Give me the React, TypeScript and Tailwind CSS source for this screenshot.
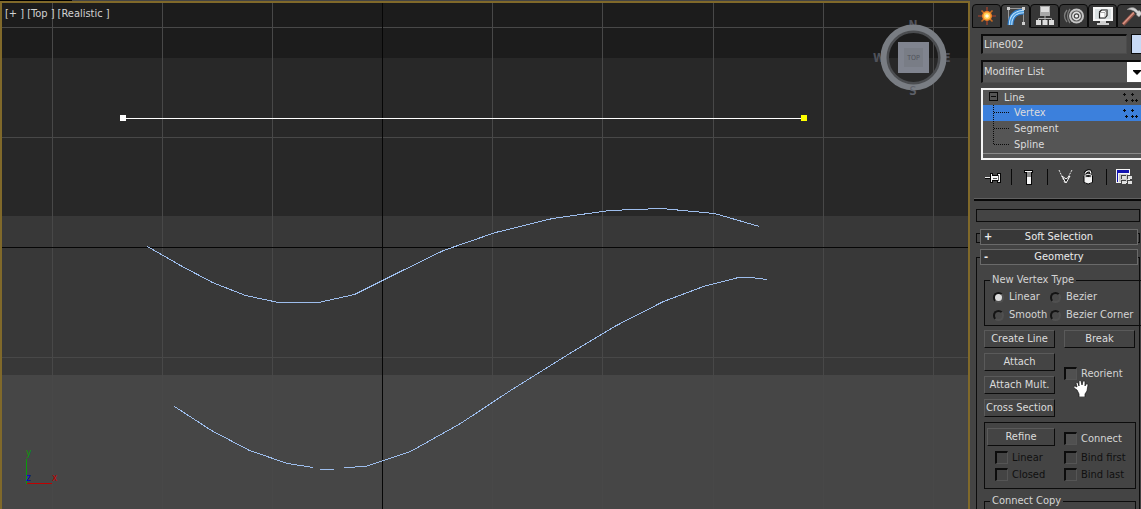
import { useState } from "react";
import type { ReactNode } from "react";

const fieldCls = "border-2 border-r border-b border-[#0c0c0c] border-r-[#4c4c4c] border-b-[#4c4c4c] bg-[#555555] text-[#dcdcdc]";
const btnCls = "h-[18px] border border-[#5a5a5a] border-r-[#0c0c0c] border-b-[#0c0c0c] bg-[#444444] text-center leading-[16px] whitespace-nowrap text-[#dcdcdc]";
const radioCls = "size-[11px] shrink-0 appearance-none rounded-full border-2 border-[#141414] border-r-[#505050] border-b-[#505050] bg-[#4a4a4a] checked:bg-[#dddddd]";
const checkCls = "size-[13px] shrink-0 appearance-none border-2 border-r border-b border-[#0c0c0c] border-r-[#555555] border-b-[#555555] bg-[#505050] disabled:bg-[#444444]";

const GRID_X = [52, 162, 272, 492, 602, 713, 823, 933];
const GRID_Y = [27, 137, 357];
const BANDS = [
  { y: 3, h: 55, fill: "#1c1c1c" },
  { y: 58, h: 158, fill: "#282828" },
  { y: 216, h: 159, fill: "#383838" },
  { y: 375, h: 200, fill: "#464646" },
];
const SPLINES = [
  "147,246 180,265 212,282 245,295 278,302 318,302 354,294 398,272 443,250 495,232 552,218 609,210 661,208 714,213 759,226",
  "174,406 211,430 249,450 287,463 313,467",
  "319,469 333,469",
  "344,467 365,466 410,451 460,423 510,390 566,355 616,325 663,301 703,286 738,277 750,277 767,279",
];

function Viewport() {
  return (
    <main className="relative min-w-0 flex-1 overflow-hidden border-x-2 border-t-2 border-[#80692a] bg-[#464646]">
      <svg className="absolute inset-0 h-full w-full" viewBox="2 3 966 506" preserveAspectRatio="xMinYMin slice" fontFamily="DejaVu Sans Condensed, sans-serif">
        <g shapeRendering="crispEdges">
          {BANDS.map((b) => <rect key={b.y} x="0" y={b.y} width="968" height={b.h} fill={b.fill} />)}
          {GRID_X.map((x) => <rect key={x} x={x} y="3" width="1" height="506" fill="#484848" />)}
          {GRID_Y.map((y) => <rect key={y} x="2" y={y} width="966" height="1" fill="#484848" />)}
          <rect x="382" y="3" width="1" height="506" fill="#060606" />
          <rect x="2" y="247" width="966" height="1" fill="#060606" />
          <rect x="123" y="118" width="681" height="1" fill="#ffffff" />
          <rect x="120" y="115" width="6" height="6" fill="#ffffff" />
          <rect x="801" y="115" width="6" height="6" fill="#ffff00" />
          {SPLINES.map((p) => <polyline key={p} points={p} fill="none" stroke="#9dbdec" strokeWidth="1" transform="translate(.5 .5)" />)}
          <rect x="26" y="459" width="1" height="25" fill="#0a9a0a" />
          <rect x="27" y="483" width="25" height="1" fill="#c00000" />
        </g>
        <g fontSize="10">
          <text x="26" y="456" fill="#0a9a0a">y</text>
          <text x="26" y="481" fill="#0000d0">z</text>
          <text x="52" y="481" fill="#c00000">x</text>
        </g>
        {/* view cube */}
        <g fontSize="12" fontWeight="bold" fill="#50525a" textAnchor="middle">
          <text x="913" y="29">N</text>
          <text x="913" y="95">S</text>
          <text x="879" y="62">W</text>
          <text x="947" y="62">E</text>
        </g>
        <circle cx="913.5" cy="57.5" r="26" fill="none" stroke="#4b4d50" strokeWidth="3" />
        <circle cx="913.5" cy="57.5" r="30" fill="none" stroke="#797d83" strokeWidth="6" />
        <rect x="898" y="42" width="31" height="31" fill="#80848f" />
        <rect x="904" y="48" width="19" height="19" fill="#797d86" />
        <text x="913.5" y="60" fontSize="7" fill="#50535b" textAnchor="middle">TOP</text>
        <text x="913" y="95" fontSize="12" fill="#60636b" textAnchor="middle">S</text>
      </svg>
      <div className="relative flex gap-[3px] px-[3px] pt-[3px] leading-[16px] text-[#d2d2d2]">
        <span>[+ ]</span>
        <span>[Top ]</span>
        <span>[Realistic ]</span>
      </div>
    </main>
  );
}

function CreateIcon() {
  return (
    <svg width="20" height="20" viewBox="0 0 20 20">
      <path d="M10 1v18M1 10h18" stroke="#b0452c" strokeWidth="1.2" />
      <path d="M4.5 4.5l11 11M15.5 4.500l-11 11" stroke="#c76a22" strokeWidth="1.6" />
      <circle cx="10" cy="10" r="5" fill="#ef8526" />
      <circle cx="10" cy="10" r="3.4" fill="#ffd257" />
      <circle cx="10" cy="10" r="1.8" fill="#fffbe0" />
    </svg>
  );
}

function ModifyIcon() {
  return (
    <svg width="20" height="20" viewBox="0 0 20 20" fill="none">
      <path d="M2.5 18V2.5H17.5V17" stroke="#9a9a9a" />
      <path d="M4.500 19C4.500 10 10 5.500 18 5.500" stroke="#2c78c4" strokeWidth="6" />
      <path d="M4.500 19C4.500 10 10 5.500 18 5.500" stroke="#c4e4fa" strokeWidth="3.500" />
      <path d="M4.500 19C4.500 10 10 5.500 18 5.500" stroke="#4a9be0" strokeWidth="1.500" />
      <path d="M1 1h3v3H1zM16 1h3v3h-3zM16 16h3v3h-3z" fill="#d0d0d0" />
    </svg>
  );
}

function HierarchyIcon() {
  return (
    <svg width="20" height="20" viewBox="0 0 20 20">
      <path d="M5 0h10v10H5z" fill="#a8a8a8" />
      <path d="M6 1h8v5H6z" fill="#dcdcdc" />
      <path d="M10 10v5M3.500 15v-2.500h13V15" stroke="#b0b0b0" fill="none" />
      <path d="M1 14h5v5H1zM7.500 14h5v5h-5zM14 14h5v5h-5z" fill="#dddddd" />
    </svg>
  );
}

function MotionIcon() {
  return (
    <svg width="22" height="20" viewBox="0 0 22 20" fill="none">
      <path d="M4 4q-5 6 0 12M7 3q-5 7 0 14" stroke="#7c7c7c" strokeWidth="1.300" />
      <circle cx="13.500" cy="10" r="7.500" fill="#c4c4c4" />
      <circle cx="13.500" cy="10" r="5" fill="#e0e0e0" stroke="#5a5a5a" strokeWidth="1.200" />
      <circle cx="13.500" cy="10" r="2.200" fill="#f4f4f4" stroke="#444" strokeWidth="1.200" />
    </svg>
  );
}

function DisplayIcon() {
  return (
    <svg width="22" height="20" viewBox="0 0 22 20">
      <path d="M1 1h20v14H1z" fill="#f6f6f6" />
      <path d="M3 3h16v10H3z" fill="#dbe1e2" />
      <path d="M7.500 6l2-2h5.500v5.500l-2 2.500H7.500z" fill="#fff" stroke="#1a1a1a" strokeWidth="1.200" />
      <path d="M7.500 6.500H13V12M13 6l2-2" fill="none" stroke="#8a8a8a" strokeWidth=".7" />
      <path d="M8 15h6v2h3v2H5v-2h3z" fill="#cfcfcf" />
    </svg>
  );
}

function HammerIcon() {
  return (
    <svg width="22" height="20" viewBox="0 0 22 20">
      <path d="M2 18.500L13 7" stroke="#8f5348" strokeWidth="3.600" />
      <path d="M2 18L13 6.500" stroke="#d99484" strokeWidth="1.600" />
      <path d="M6 3.500q5-3.500 9-.5l2 2 1.500-.5L21 7.500 18 11l-2.500-2 .2-1.700L13 5q-3-2-7-1.500z" fill="#d4d4d4" stroke="#8a8a8a" strokeWidth=".6" />
    </svg>
  );
}

const TABS: { name: string; icon: ReactNode }[] = [
  { name: "Create", icon: <CreateIcon /> },
  { name: "Modify", icon: <ModifyIcon /> },
  { name: "Hierarchy", icon: <HierarchyIcon /> },
  { name: "Motion", icon: <MotionIcon /> },
  { name: "Display", icon: <DisplayIcon /> },
  { name: "Utilities", icon: <HammerIcon /> },
];

function Dots() {
  return (
    <svg className="mr-[3px] ml-auto shrink-0" width="16" height="15" viewBox="0 0 16 15" fill="#0a0a0a" shapeRendering="crispEdges">
      <path d="M1 4h3v1H1zM2 3h1v3H2zM9 4h3v1H9zM10 3h1v3h-1zM3 10h3v1H3zM4 9h1v3H4zM9 10h3v1H9zM10 9h1v3h-1zM13 10h3v1h-3zM14 9h1v3h-1z" />
    </svg>
  );
}

function Check({ label, disabled }: { label: string; disabled?: boolean }) {
  return (
    <label className={`flex items-center gap-1 leading-[17px] whitespace-nowrap ${disabled ? "text-[#101010]" : ""}`}>
      <input type="checkbox" className={checkCls} disabled={disabled} />
      {label}
    </label>
  );
}

// header bar that sits over the top edge of its frame
function Rollout({ sign, title, className }: { sign: string; title: string; className: string }) {
  return (
    <div className={`mr-px ml-[3px] ${className}`}>
      <button className="relative flex h-4 w-full items-center justify-center border border-[#6a6a6a] bg-[#383838] text-[#ececec]">
        <span className="absolute left-[3px] font-bold">{sign}</span>
        {title}
      </button>
    </div>
  );
}

function StackToolbar() {
  return (
    <div className="flex h-[18px] items-center text-[#050505]">
      <button aria-label="Pin stack" className="mr-[9px] ml-1">
        <svg width="17" height="14" viewBox="0 0 17 14" shapeRendering="crispEdges">
          <path d="M0 8h6v1H0z" fill="#050505" />
          <path d="M0 7h6v1H0z" fill="#f0f0f0" />
          <path d="M5 3h3v2h4V3h4v10h-4v-2H8v2H5z" fill="#050505" />
          <path d="M6 4h1v2h6V4h2v8h-2v-2H7v2H6z" fill="#f4f4f4" />
          <path d="M8 8h4v1H8zM13 5h1v6h-1z" fill="#555" />
        </svg>
      </button>
      <span className="h-4 w-px bg-[#0a0a0a]" />
      <button aria-label="Show end result" className="mr-3 ml-[10px]">
        <svg width="13" height="16" viewBox="0 0 13 16" shapeRendering="crispEdges">
          <path d="M2 1h9v3h-1v12H4V4H2z" fill="#050505" />
          <path d="M3 2h7v1H9v12H5V3H3z" fill="#f8f8f8" />
          <path d="M5 3h4v5H5z" fill="#8c8c8c" />
        </svg>
      </button>
      <span className="h-4 w-px bg-[#0a0a0a]" />
      <button aria-label="Make unique" className="mr-[9px] ml-[10px]">
        <svg width="16" height="16" viewBox="0 0 16 16" fill="none">
          <path d="M1 1l6 13 7-13" stroke="#e8e8e8" strokeDasharray="2 1" />
          <path d="M4 7l4 3 4-3-4 7z" fill="#111" stroke="#fff" />
        </svg>
      </button>
      <button aria-label="Remove modifier">
        <svg width="11" height="16" viewBox="0 0 11 16">
          <path d="M1 7v6.500q4 3 8.500 0V7z" fill="#f4f4f4" stroke="#050505" />
          <ellipse cx="5.200" cy="7" rx="3.500" ry="1.500" fill="#111" stroke="#fff" />
          <path d="M2 4.500q2-3.500 5-2.500l1 2.500" fill="none" stroke="#050505" strokeWidth="3" />
          <path d="M2 4.500q2-3.500 5-2.500l1 2.500" fill="none" stroke="#fff" strokeWidth="1.200" />
        </svg>
      </button>
      <span className="ml-3 h-4 w-px bg-[#0a0a0a]" />
      <button aria-label="Configure modifier sets" className="ml-[9px]">
        <svg width="17" height="16" viewBox="0 0 17 16" shapeRendering="crispEdges">
          <path d="M0 0h14v14H0z" fill="#f4f4f4" />
          <path d="M1 1h12v3H1zM1 4h1v9H1z" fill="#1212b0" />
          <path d="M3 5h9v8H3z" fill="#c8c8c8" />
          <path d="M5 6h5v4H5zM11 6h5v4h-5zM5 11h5v4H5zM11 11h5v4h-5z" fill="#444" />
          <path d="M6 7h4v3H6zM12 7h4v3h-4zM6 12h4v3H6zM12 12h4v3h-4z" fill="#e0e0e0" />
        </svg>
      </button>
    </div>
  );
}

export default function App() {
  const [tab, setTab] = useState("Modify");
  const [level, setLevel] = useState("Vertex");
  const [name, setName] = useState("Line002");

  return (
    <div className="flex h-screen flex-col overflow-hidden bg-[#444444] font-['DejaVu_Sans_Condensed',sans-serif] text-[11px] text-[#d4d4d4]">
      <div className="h-px w-[72px] shrink-0 bg-black" />
      <div className="flex min-h-0 flex-1">
        <Viewport />
        <aside className="w-[171px] shrink-0 overflow-hidden pl-[2px]">
          <nav className="mt-[3px] flex h-6 w-[174px]">
            {TABS.map((t) => (
              <button key={t.name} aria-label={t.name} onClick={() => setTab(t.name)}
                className={`flex w-[29px] shrink-0 items-center justify-center rounded-t-sm border border-[#0a0a0a] ${tab === t.name ? "border-b-transparent bg-[#444444]" : "bg-[#363636]"}`}>
                {t.icon}
              </button>
            ))}
          </nav>

          <div className="mt-[6px] ml-[9px] flex gap-1">
            <input aria-label="Object name" className={`h-5 w-[146px] shrink-0 px-px ${fieldCls}`} value={name} onChange={(e) => setName(e.target.value)} />
            <button aria-label="Object colour" className="h-5 flex-1 border border-r-0 border-[#0c0c0c] bg-[#c8daf5]" />
          </div>
          <div className="relative mt-[6px] ml-[9px]">
            <select aria-label="Modifier List" className={`h-[23px] w-full appearance-none px-px ${fieldCls}`}>
              <option>Modifier List</option>
            </select>
            <span className="pointer-events-none absolute top-[2px] right-0 flex h-5 w-[14px] items-center justify-end bg-white">
              <svg width="9" height="5" viewBox="0 0 9 5" fill="#050505"><path d="M1 0h8v1L5 5 1 1z" /></svg>
            </span>
          </div>

          <ul className="mt-[5px] ml-[9px] h-[72px] border-2 border-r-0 border-[#f4f4f4] bg-[#555555] text-[#dcdcdc]">
            <li className="flex h-[15px] items-center">
              <svg width="21" height="15" viewBox="0 0 21 15" fill="none" stroke="#0a0a0a" shapeRendering="crispEdges">
                <path d="M6.500 2.500h8v8h-8zM8 6.500h5" />
              </svg>
              <span className="pt-px">Line</span>
              <Dots />
            </li>
            {["Vertex", "Segment", "Spline"].map((s, i) => (
              <li key={s}>
                <button onClick={() => setLevel(s)} className={`flex h-4 w-full items-center ${level === s ? "bg-[#3c80dc]" : ""}`}>
                  <svg width="31" height="16" viewBox="0 0 31 16" fill="none" stroke="#0a0a0a" strokeDasharray="1 1" shapeRendering="crispEdges">
                    <path d={i === 2 ? "M10.500 0v8M11 7.500h15" : "M10.500 0v16M11 7.500h15"} />
                  </svg>
                  <span className="pt-px">{s}</span>
                  {level === s && <Dots />}
                </button>
              </li>
            ))}
            <li className="border-t border-[#8a8a8a]" />
          </ul>

          <div className="mt-2 ml-[9px]"><StackToolbar /></div>
          <div className="mt-3 ml-[2px] h-[3px] border-b-2 border-[#080808] bg-[#606060]" />

          <div className="mt-2 mr-px ml-1 h-[13px] border border-[#0c0c0c]" />
          <div className="mt-[11px] mr-px ml-1 h-[10px] border border-[#0c0c0c]">
            <Rollout sign="+" title="Soft Selection" className="-mt-[5px]" />
          </div>

          <div className="mt-[14px] mr-px ml-1 border border-b-0 border-[#0c0c0c]">
            <Rollout sign="-" title="Geometry" className="-mt-[9px]" />
            <div className="px-[7px] pt-[7px]">
              <fieldset className="h-[54px] w-[152px] border border-[#0c0c0c] px-2">
                <legend className="-ml-[3px] px-[2px] leading-[16px]">New Vertex Type</legend>
                <div className="grid grid-cols-[57px_1fr] leading-[18px] whitespace-nowrap">
                  {["Linear", "Bezier", "Smooth", "Bezier Corner"].map((v) => (
                    <label key={v} className="flex items-center gap-[5px]">
                      <input type="radio" name="vertex-type" className={radioCls} defaultChecked={v === "Linear"} />
                      {v}
                    </label>
                  ))}
                </div>
              </fieldset>

              <div className="mt-1 flex w-[152px] gap-[9px]">
                <div className="flex w-[71px] flex-col gap-[5px]">
                  <button className={btnCls}>Create Line</button>
                  <button className={btnCls}>Attach</button>
                  <button className={btnCls}>Attach Mult.</button>
                  <button className={btnCls}>Cross Section</button>
                </div>
                <div className="relative flex w-[71px] flex-col gap-[17px]">
                  <button className={btnCls}>Break</button>
                  <Check label="Reorient" />
                  <svg className="absolute top-[50px] left-[9px]" width="16" height="17" viewBox="0 0 16 17">
                    <path d="M4 10L1 8q-1-2 1-2l2 1-1-4q1-2 2 0l1 3V1q1-2 2 0l1 4 1-4q2-1 2 1v4l1-2q2-1 2 1l-1 6-2 3v3H6v-3z" fill="#fff" stroke="#111" strokeWidth=".7" />
                  </svg>
                </div>
              </div>

              <div className="mt-[5px] grid h-[67px] w-[152px] grid-cols-[77px_1fr] content-start border border-[#0c0c0c] pt-[5px] pl-[2px]">
                <button className={`w-[68px] ${btnCls}`}>Refine</button>
                <div className="mt-[2px]"><Check label="Connect" /></div>
                <div className="mt-[2px] ml-2"><Check label="Linear" disabled /></div>
                <div className="mt-[2px]"><Check label="Bind first" disabled /></div>
                <div className="ml-2"><Check label="Closed" disabled /></div>
                <Check label="Bind last" disabled />
              </div>

              <fieldset className="mt-1 h-[60px] w-[152px] border border-[#0c0c0c] px-2">
                <legend className="-ml-[3px] px-[2px] leading-[16px]">Connect Copy</legend>
              </fieldset>
            </div>
          </div>
        </aside>
      </div>
    </div>
  );
}
